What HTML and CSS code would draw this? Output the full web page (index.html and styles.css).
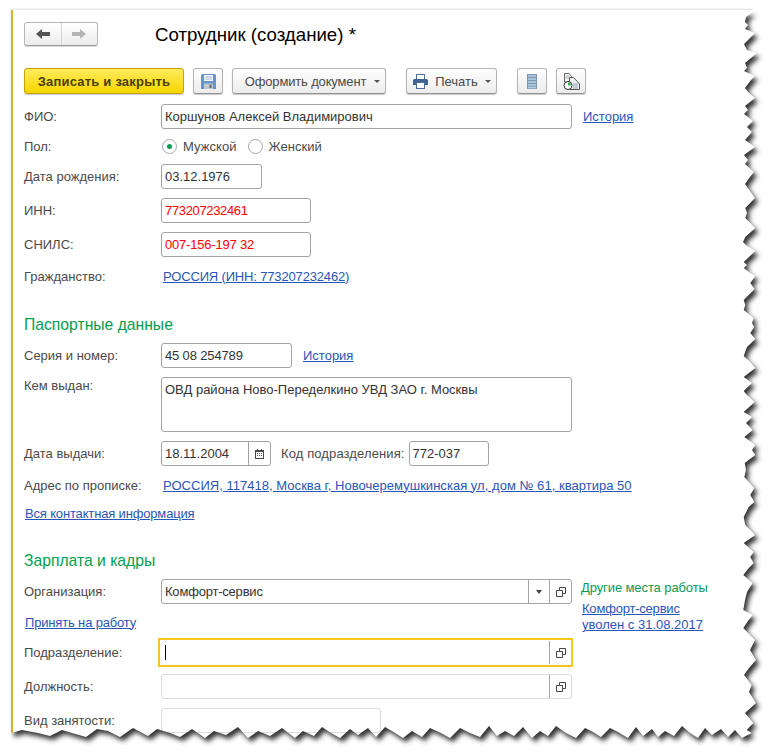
FILE: index.html
```html
<!DOCTYPE html>
<html lang="ru">
<head>
    <meta charset="UTF-8">
    <title>Сотрудник (создание)</title>
    <link rel="stylesheet" href="styles.css">
</head>
<body>
    <div class="sheet">
        <div class="title-bar">
            <div class="nav-buttons">
                <span class="nav-btn">
                    <svg width="14" height="12" viewBox="0 0 14 12"><path d="M0 6L6 1V4H14V8H6V11Z" fill="#555"/></svg>
                </span>
                <span class="nav-btn">
                    <svg width="14" height="12" viewBox="0 0 14 12"><path d="M14 6L8 1V4H0V8H8V11Z" fill="#b4b4b4"/></svg>
                </span>
            </div>
            <h1 class="page-title">Сотрудник (создание) *</h1>
        </div>

        <div class="toolbar">
            <button class="btn btn-primary">Записать и закрыть</button>
            <button class="btn btn-icon">
                <svg width="15" height="15" viewBox="0 0 15 15">
                    <path d="M0 1.500Q0 0 1.500 0H13.500Q15 0 15 1.500V15H0Z" fill="#6a94c6"/>
                    <rect x="3" y="1" width="9" height="6" fill="#eef3f8"/>
                    <path d="M4 3H11M4 5H11" stroke="#a9c0d8"/>
                    <rect x="3" y="9.500" width="9" height="5.500" fill="#c3c8cd"/>
                    <rect x="8.500" y="10.500" width="2" height="3.500" fill="#5f6870"/>
                </svg>
            </button>
            <button class="btn btn-doc">Оформить документ<span class="caret"></span></button>
            <button class="btn btn-print">
                <svg width="15" height="15" viewBox="0 0 15 15">
                    <rect x="3.500" y="0.500" width="8" height="5" fill="#fff" stroke="#4d6f96"/>
                    <path d="M1.500 5H13.500Q15 5 15 6.500V11H12V9H3V11H0V6.500Q0 5 1.500 5Z" fill="#3f6591"/>
                    <rect x="3.500" y="8.500" width="8" height="6" fill="#fff" stroke="#4d6f96"/>
                </svg>
                Печать<span class="caret"></span>
            </button>
            <button class="btn btn-icon">
                <svg width="10" height="15" viewBox="0 0 10 15">
                    <rect width="10" height="15" fill="#7d99b3"/>
                    <path d="M1 2H9M1 5H9M1 8H9M1 11H9M1 13.500H9" stroke="#b5d0e6" stroke-width="1.600"/>
                </svg>
            </button>
            <button class="btn btn-icon">
                <svg width="17" height="17" viewBox="0 0 17 17">
                    <path d="M1.500 .5H6L9 4V9H1.500Z" fill="#f4f4f4" stroke="#666"/>
                    <path d="M2.500 3H6M2.500 5H7" stroke="#aab4bd"/>
                    <path d="M6.500 4.500H10.500L16.500 11V16.500H6.500Z" fill="#eef1f4" stroke="#555"/>
                    <path d="M10 11H15M10 13H15M10 15H15" stroke="#9aa7b3"/>
                    <circle cx="5" cy="12.500" r="4" fill="#fff" stroke="#333"/>
                    <path d="M5 12.500V9.500A3 3 0 0 1 8 12.500Z" fill="#2fb34a"/>
                </svg>
            </button>
        </div>

        <div class="row row-fio">
            <label class="field-label">ФИО:</label>
            <div class="field field-wide">Коршунов Алексей Владимирович</div>
            <a class="link link-side" href="#">История</a>
        </div>

        <div class="row row-radio">
            <label class="field-label">Пол:</label>
            <span class="radio radio-on"></span><span class="radio-text">Мужской</span>
            <span class="radio"></span><span class="radio-text">Женский</span>
        </div>

        <div class="row row-gap">
            <label class="field-label">Дата рождения:</label>
            <div class="field field-date">03.12.1976</div>
        </div>
        <div class="row row-gap">
            <label class="field-label">ИНН:</label>
            <div class="field field-mid field-error field-inn">773207232461</div>
        </div>
        <div class="row row-gap">
            <label class="field-label">СНИЛС:</label>
            <div class="field field-mid field-error field-snils">007-156-197 32</div>
        </div>
        <div class="row row-text row-gap">
            <label class="field-label">Гражданство:</label>
            <a class="link link-value link-citizen" href="#">РОССИЯ (ИНН: 773207232462)</a>
        </div>

        <h2 class="section-title section-passport">Паспортные данные</h2>

        <div class="row row-first">
            <label class="field-label">Серия и номер:</label>
            <div class="field field-series">45 08 254789</div>
            <a class="link link-side" href="#">История</a>
        </div>
        <div class="row row-tall row-gap">
            <label class="field-label">Кем выдан:</label>
            <div class="field field-wide field-area">ОВД района Ново-Переделкино УВД ЗАО г. Москвы</div>
        </div>
        <div class="row row-gap">
            <label class="field-label">Дата выдачи:</label>
            <div class="field field-issue">
                <span class="field-value">18.11.2004</span>
                <span class="field-btn">
                    <svg width="9" height="10" viewBox="0 0 9 10">
                        <path d="M0 1H9V10H0Z" fill="#4a4a4a"/>
                        <path d="M1 3H8V9H1Z" fill="#fff"/>
                        <path d="M2 4H3V5H2ZM4 4H5V5H4ZM6 4H7V5H6ZM2 6H3V7H2ZM4 6H5V7H4ZM6 6H7V7H6Z" fill="#4a4a4a"/>
                        <path d="M2 0H3V2H2ZM6 0H7V2H6Z" fill="#4a4a4a"/>
                    </svg>
                </span>
            </div>
            <span class="code-label">Код подразделения:</span>
            <div class="field field-code">772-037</div>
        </div>
        <div class="row row-text row-gap">
            <label class="field-label">Адрес по прописке:</label>
            <a class="link link-value link-address" href="#">РОССИЯ, 117418, Москва г, Новочеремушкинская ул, дом № 61, квартира 50</a>
        </div>
        <div class="row row-text row-first">
            <a class="link link-solo" href="#">Вся контактная информация</a>
        </div>

        <h2 class="section-title section-staff">Зарплата и кадры</h2>

        <div class="staff-grid">
            <div class="staff-form">
                <div class="row row-first">
                    <label class="field-label">Организация:</label>
                    <div class="field field-wide field-combo">
                        <span class="field-value field-org">Комфорт-сервис</span>
                        <span class="field-btn field-btn-arrow"><span class="caret caret-combo"></span></span>
                        <span class="field-btn">
                            <svg class="open-icon" width="10" height="10" viewBox="0 0 10 10"><path d="M3.500 3V.5H9.500V6.500H6.500V3.500H3.500ZM3.500 3.500H.5V9.500H6.500V6.500" fill="none" stroke="#444"/></svg>
                        </span>
                    </div>
                </div>
                <div class="row row-text row-first">
                    <a class="link link-solo" href="#">Принять на работу</a>
                </div>
                <div class="row row-focus">
                    <label class="field-label field-label-focus">Подразделение:</label>
                    <div class="field field-focus">
                        <span class="field-value"><span class="cursor"></span></span>
                        <span class="field-btn">
                            <svg class="open-icon" width="10" height="10" viewBox="0 0 10 10"><path d="M3.500 3V.5H9.500V6.500H6.500V3.500H3.500ZM3.500 3.500H.5V9.500H6.500V6.500" fill="none" stroke="#444"/></svg>
                        </span>
                    </div>
                </div>
                <div class="row row-post">
                    <label class="field-label">Должность:</label>
                    <div class="field field-wide field-light">
                        <span class="field-value"></span>
                        <span class="field-btn">
                            <svg class="open-icon" width="10" height="10" viewBox="0 0 10 10"><path d="M3.500 3V.5H9.500V6.500H6.500V3.500H3.500ZM3.500 3.500H.5V9.500H6.500V6.500" fill="none" stroke="#444"/></svg>
                        </span>
                    </div>
                </div>
                <div class="row row-gap">
                    <label class="field-label">Вид занятости:</label>
                    <div class="field field-kind field-light"></div>
                </div>
            </div>
            <div class="other-jobs">
                <div class="other-title">Другие места работы</div>
                <a class="link other-link" href="#">Комфорт-сервис</a>
                <a class="link other-link" href="#">уволен с 31.08.2017</a>
            </div>
        </div>
    </div>

    <!-- torn paper edge over the form -->
    <svg class="torn-edge" width="772" height="756" viewBox="0 0 772 756">
        <defs>
            <clipPath id="outside">
                <path d="M752 0L752.700 11.700L746 17L745 22L748 25L745 29L755 33L744 44L747 50L757 53L745 63L747 68L744 71L755 76L751 80L745 88L749 93L755 98L745 106L748 110L744 114L753 121L747 127L752 132L745 140L755 147L744 155L748 160L745 164L754 172L750 177L745 184L755 198L745.300 208L747 213L745.300 218L755.300 228L745.300 237L743 242L746 245L755.300 251L743.700 262L747 265L743.700 268L750.300 273L755.300 276L750.300 283L754.700 289L743.700 300L745.300 305L743.700 310L753.700 318L752 323L754.300 327L750.300 333L755.300 339L747 347L743.700 356L750.300 362L755.300 368L743.700 377L752 383L743.700 391L746 394L754.700 402L743.700 412L752 417L746 423L752.700 430L744.300 437L755.300 445L752 450L755.300 455L744.700 463L746 470L744.300 477L754.300 488L750.300 495L754.300 502L748.700 507L743.700 517L745.300 525L755.300 535L743.700 543L753.700 552L750.300 557L753.700 563L748 569L743.300 575L752.700 583L747 592L745 600L743.300 610L752.700 615L748 621L743.300 628L755 640L750 650L756 660L749 668L744 675L751.700 685L749 692L756 703L745 713L753.300 723L746.700 730L751.700 733L742 738L735 730L728 737L721 729L712 735L705 728L698 738L690 733L682 726L674 736L665 731L658 737L652 729L643 736L636 727L628 738L618 732L610 728L601 737L593 732L585 728L576 738L566 733L556 726L548 736L540 731L532 738L523 727L514 736L505 731L497 736L489 726L480 737L470 733L460 728L450 738L441 733L430 728L422 737L412 731L403 738L392 731L385 727L376 737L368 728L358 735L350 729L340 738L331 733L322 727L314 736L303 731L295 738L282 728L270 736L258 731L248 738L238 727L226 735L214 731L205 738L192 729L180 737L170 733L157 729L148 736L133 728L120 737L108 731L97 729L86 737L72 733L62 730L50 736L38 733L22 730L11 733L0 733L0 756L772 756L772 0Z"/>
            </clipPath>
            <filter id="blur" x="-5%" y="-5%" width="110%" height="110%">
                <feGaussianBlur stdDeviation="2.500"/>
            </filter>
        </defs>
        <g clip-path="url(#outside)">
            <rect width="772" height="756" fill="#fff"/>
            <path class="torn-shadow" filter="url(#blur)" transform="translate(3 4)" d="M11 10L752.700 11.700L746 17L745 22L748 25L745 29L755 33L744 44L747 50L757 53L745 63L747 68L744 71L755 76L751 80L745 88L749 93L755 98L745 106L748 110L744 114L753 121L747 127L752 132L745 140L755 147L744 155L748 160L745 164L754 172L750 177L745 184L755 198L745.300 208L747 213L745.300 218L755.300 228L745.300 237L743 242L746 245L755.300 251L743.700 262L747 265L743.700 268L750.300 273L755.300 276L750.300 283L754.700 289L743.700 300L745.300 305L743.700 310L753.700 318L752 323L754.300 327L750.300 333L755.300 339L747 347L743.700 356L750.300 362L755.300 368L743.700 377L752 383L743.700 391L746 394L754.700 402L743.700 412L752 417L746 423L752.700 430L744.300 437L755.300 445L752 450L755.300 455L744.700 463L746 470L744.300 477L754.300 488L750.300 495L754.300 502L748.700 507L743.700 517L745.300 525L755.300 535L743.700 543L753.700 552L750.300 557L753.700 563L748 569L743.300 575L752.700 583L747 592L745 600L743.300 610L752.700 615L748 621L743.300 628L755 640L750 650L756 660L749 668L744 675L751.700 685L749 692L756 703L745 713L753.300 723L746.700 730L751.700 733L742 738L735 730L728 737L721 729L712 735L705 728L698 738L690 733L682 726L674 736L665 731L658 737L652 729L643 736L636 727L628 738L618 732L610 728L601 737L593 732L585 728L576 738L566 733L556 726L548 736L540 731L532 738L523 727L514 736L505 731L497 736L489 726L480 737L470 733L460 728L450 738L441 733L430 728L422 737L412 731L403 738L392 731L385 727L376 737L368 728L358 735L350 729L340 738L331 733L322 727L314 736L303 731L295 738L282 728L270 736L258 731L248 738L238 727L226 735L214 731L205 738L192 729L180 737L170 733L157 729L148 736L133 728L120 737L108 731L97 729L86 737L72 733L62 730L50 736L38 733L22 730L11 733Z"/>
        </g>
    </svg>
</body>
</html>
```

FILE: styles.css
```css
html, body {
    margin: 0;
    padding: 0;
    background: #fff;
}
body {
    width: 772px;
    height: 756px;
    overflow: hidden;
    position: relative;
    font-family: "Liberation Sans", Arial, sans-serif;
    font-size: 13px;
    color: #333;
}
.sheet {
    box-sizing: border-box;
    width: 745px;
    height: 730px;
    margin: 10px 0 0 11px;
    padding: 12px 0 0 11px;
    border-left: 2px solid #d6b52a;
    background: #fff;
    box-shadow: 0 -1px 2px rgba(0, 0, 0, 0.14);
    overflow: hidden;
}
.torn-edge {
    position: absolute;
    left: 0;
    top: 0;
    pointer-events: none;
}
.torn-shadow {
    fill: #333;
}

/* title and toolbar */
.title-bar {
    display: flex;
    align-items: center;
    height: 24px;
}
.nav-buttons {
    display: flex;
    box-sizing: border-box;
    width: 74px;
    height: 24px;
    border: 1px solid #b8b8b8;
    border-bottom-color: #999;
    border-radius: 3px;
    background: linear-gradient(#fff, #ececec);
    box-shadow: 0 1px 1px rgba(0, 0, 0, 0.15);
}
.nav-btn {
    flex: 1;
    display: flex;
    align-items: center;
    justify-content: center;
}
.nav-btn + .nav-btn {
    border-left: 1px solid #d4d4d4;
}
.page-title {
    margin: 2px 0 0 57px;
    font-size: 18.67px;
    font-weight: normal;
    color: #000;
}
.toolbar {
    display: flex;
    align-items: stretch;
    height: 26px;
    margin-top: 22px;
}
.btn {
    box-sizing: border-box;
    display: flex;
    align-items: center;
    justify-content: center;
    padding: 0;
    border: 1px solid #b4b4b4;
    border-bottom-color: #909090;
    border-radius: 3px;
    background: linear-gradient(#fff, #ececec);
    box-shadow: 0 1px 1px rgba(0, 0, 0, 0.2);
    font-family: inherit;
    font-size: 13px;
    color: #4a4a4a;
}
.btn-primary {
    width: 160px;
    border-color: #c6a400;
    background: linear-gradient(#ffeb5c, #f6d500);
    font-weight: bold;
    letter-spacing: 0.2px;
    color: #4c3d00;
}
.btn-icon {
    width: 30px;
    margin-left: 9px;
}
.btn-doc {
    width: 154px;
    margin-left: 9px;
    padding-left: 7px;
    letter-spacing: -0.15px;
}
.btn-print {
    width: 91px;
    margin-left: 20px;
    padding-left: 1px;
    gap: 7px;
}
.btn-print .caret {
    margin-left: 0;
}
.btn-print + .btn-icon {
    margin-left: 20px;
}
.caret {
    display: inline-block;
    width: 0;
    height: 0;
    margin-left: 8px;
    border-left: 3px solid transparent;
    border-right: 3px solid transparent;
    border-top: 3px solid #555;
}
.caret-combo {
    margin-left: 0;
    border-left-width: 3.5px;
    border-right-width: 3.5px;
    border-top-width: 4px;
    border-top-color: #444;
}

/* form rows */
.row {
    display: flex;
    align-items: center;
    height: 25px;
}
.row-fio {
    margin-top: 10px;
}
.row-radio {
    height: 17px;
    margin-top: 9px;
}
.row-gap {
    margin-top: 9px;
}
.row-first {
    margin-top: 8px;
}
.row-text {
    height: 20px;
}
.row-tall {
    height: 55px;
    align-items: flex-start;
}
.row-tall .field-label {
    margin-top: 1px;
}
.row-focus {
    height: 29px;
    margin-top: 6px;
}
.row-post {
    margin-top: 7px;
}
.field-label {
    flex: none;
    width: 137px;
    color: #4a4a4a;
}
.field-label-focus {
    width: 134px;
}
.field {
    box-sizing: border-box;
    display: flex;
    align-items: center;
    height: 25px;
    padding-left: 3px;
    border: 1px solid #a3a3a3;
    border-radius: 3px;
    background: #fff;
    color: #333;
    overflow: hidden;
}
.field-wide {
    width: 411px;
}
.field-date {
    width: 101px;
}
.field-mid {
    width: 150px;
}
.field-series {
    width: 131px;
    letter-spacing: -0.15px;
}
.field-error {
    color: #f00;
}
.field-inn {
    letter-spacing: -0.35px;
}
.field-snils {
    letter-spacing: -0.2px;
}
.field-area {
    align-items: flex-start;
    height: 55px;
    padding-top: 4px;
}
.field-issue {
    width: 110px;
}
.field-code {
    width: 80px;
}
.field-kind {
    width: 220px;
}
.field-org {
    letter-spacing: -0.2px;
}
.code-label {
    margin: 0 4px 0 10px;
    letter-spacing: 0.11px;
    color: #4a4a4a;
}
.field-value {
    flex: 1;
    min-width: 0;
}
.field-btn {
    flex: none;
    box-sizing: border-box;
    display: flex;
    align-items: center;
    justify-content: center;
    width: 22px;
    height: 100%;
    border-left: 1px solid #a3a3a3;
}
.field-btn-arrow {
    width: 21px;
}
.field-light {
    border-color: #dcdcdc;
}
.field-focus {
    width: 415px;
    height: 29px;
    padding-left: 5px;
    border: 2px solid #f7c61c;
    border-radius: 0;
}
.field-focus .field-btn {
    height: 23px;
}
.cursor {
    display: block;
    width: 1px;
    height: 15px;
    background: #000;
}
.open-icon {
    display: block;
}

.radio {
    box-sizing: border-box;
    flex: none;
    display: flex;
    align-items: center;
    justify-content: center;
    width: 15px;
    height: 15px;
    margin-left: 1px;
    border: 1px solid #a8a8a8;
    border-radius: 50%;
    background: #fff;
}
.radio-on::after {
    content: "";
    width: 5px;
    height: 5px;
    border-radius: 50%;
    background: #169a56;
}
.radio-text {
    margin: 0 10px 0 6px;
    letter-spacing: 0.05px;
    color: #4a4a4a;
}

/* links */
.link {
    color: #2a56b8;
    text-decoration: underline;
}
.link-side {
    margin-left: 11px;
}
.link-value {
    margin-left: 2px;
}
.link-citizen {
    letter-spacing: -0.16px;
}
.link-address {
    letter-spacing: 0.03px;
}
.link-solo {
    margin-left: 1px;
    letter-spacing: -0.16px;
}

/* sections */
.section-title {
    height: 20px;
    margin: 0;
    font-size: 15.7px;
    line-height: 20px;
    font-weight: normal;
    color: #00a04c;
}
.section-passport {
    margin-top: 29px;
}
.section-staff {
    margin-top: 28px;
}
.staff-grid {
    display: grid;
    grid-template-columns: 557px 1fr;
}
.other-jobs {
    display: flex;
    flex-direction: column;
    align-items: flex-start;
    padding-top: 1px;
}
.other-title {
    margin-top: 8px;
    margin-bottom: 6px;
    line-height: 15px;
    letter-spacing: -0.1px;
    color: #0a9a55;
}
.other-link {
    margin-left: 1px;
    line-height: 16px;
}
.other-link:first-of-type {
    letter-spacing: -0.2px;
}
```
